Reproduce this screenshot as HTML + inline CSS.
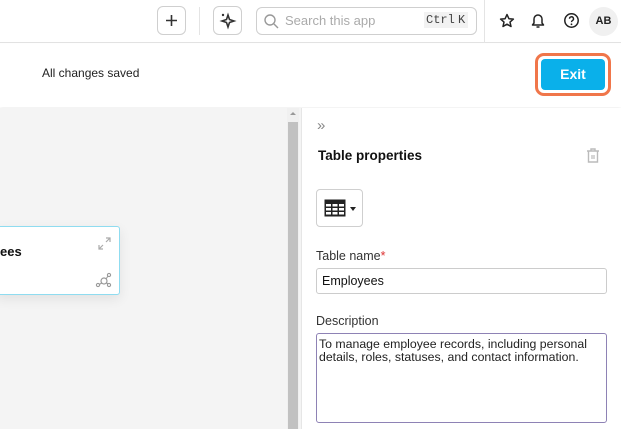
<!DOCTYPE html>
<html><head><style>
*{box-sizing:border-box;margin:0;padding:0}
body{width:621px;height:429px;overflow:hidden;font-family:"Liberation Sans",sans-serif;background:#fff;position:relative;color:#111}
.a{position:absolute}
.btn{border:1px solid #cfcfcf;border-radius:6px;background:#fff}
</style></head><body>
<div class="a" style="left:0;top:0;width:621px;height:43px;border-bottom:1px solid #e2e2e2;background:#fff"></div>
<div class="a btn" style="left:157px;top:6px;width:29px;height:29px"><svg width="27" height="27"><path d="M13.5 8v11M8 13.5h11" stroke="#333" stroke-width="1.6"/></svg></div>
<div class="a" style="left:199px;top:7px;width:1px;height:28px;background:#e4e4e4"></div>
<div class="a btn" style="left:213px;top:6px;width:29px;height:29px">
<svg width="27" height="27" viewBox="0 0 27 27"><path d="M14 8 L15.5 12.5 L20 14 L15.5 15.5 L14 20 L12.5 15.5 L8 14 L12.5 12.5Z" fill="none" stroke="#333" stroke-width="1.6"/><circle cx="9" cy="8" r="1.2" fill="#333"/></svg></div>
<div class="a" style="left:256px;top:7px;width:221px;height:28px;border:1px solid #cfcfcf;border-radius:6px"></div>
<svg class="a" style="left:263px;top:13px" width="16" height="16"><circle cx="7" cy="7" r="5" fill="none" stroke="#999" stroke-width="1.4"/><path d="M11 11l4 4" stroke="#999" stroke-width="1.4"/></svg>
<div class="a" style="left:285px;top:13px;font-size:13px;color:#aaa">Search this app</div>
<div class="a" style="left:424px;top:12px;font-family:'Liberation Mono',monospace;font-size:12px;color:#444;background:#f2f2f2;padding:1px 2px">Ctrl</div>
<div class="a" style="left:455px;top:12px;font-family:'Liberation Mono',monospace;font-size:12px;color:#444;background:#f2f2f2;padding:1px 3px">K</div>
<div class="a" style="left:484px;top:0;width:1px;height:43px;background:#e4e4e4"></div>
<svg class="a" style="left:499px;top:13px" width="16" height="16"><path d="M8 1.5l1.9 4.2 4.5.4-3.4 3 1 4.4L8 11.2 4 13.5l1-4.4-3.4-3 4.5-.4z" fill="none" stroke="#222" stroke-width="1.5" stroke-linejoin="round"/></svg>
<svg class="a" style="left:530px;top:12px" width="16" height="17"><path d="M4 11V7a4 4 0 018 0v4l1.5 2h-11z" fill="none" stroke="#222" stroke-width="1.5" stroke-linejoin="round"/><path d="M6.5 15h3" stroke="#222" stroke-width="1.5"/></svg>
<svg class="a" style="left:563px;top:12px" width="17" height="17"><circle cx="8.5" cy="8.5" r="6.7" fill="none" stroke="#222" stroke-width="1.5"/><path d="M6.5 6.8a2 2 0 113 1.7c-.7.4-1 .8-1 1.6" fill="none" stroke="#222" stroke-width="1.4"/><circle cx="8.5" cy="12.3" r=".9" fill="#222"/></svg>
<div class="a" style="left:589px;top:7px;width:29px;height:29px;border-radius:50%;background:#f0f0f0;font-size:11px;font-weight:bold;text-align:center;line-height:29px;color:#222">AB</div>

<div class="a" style="left:0;top:44px;width:621px;height:63px;background:#fff;box-shadow:0 2px 4px rgba(0,0,0,.06)"></div>
<div class="a" style="left:42px;top:66px;font-size:12px;color:#222">All changes saved</div>
<div class="a" style="left:535px;top:53px;width:76px;height:43px;border:3px solid #f0764a;border-radius:9px"></div>
<div class="a" style="left:541px;top:59px;width:64px;height:31px;background:#0ab0ea;border-radius:4px;color:#fff;font-size:14px;font-weight:bold;text-align:center;line-height:31px">Exit</div>

<div class="a" style="left:0;top:108px;width:301px;height:321px;background:#f4f4f4"></div>
<div class="a" style="left:287px;top:108px;width:12px;height:321px;background:#f0f0f0"></div>
<div class="a" style="left:288px;top:122px;width:10px;height:307px;background:#c1c1c1"></div>
<div class="a" style="left:290px;top:112px;width:0;height:0;border-left:3px solid transparent;border-right:3px solid transparent;border-bottom:3px solid #999"></div>

<div class="a" style="left:-4px;top:226px;width:124px;height:69px;background:#fff;border:1px solid #8fdcf0;border-radius:3px;box-shadow:0 4px 12px rgba(0,0,0,.08)"></div>
<div class="a" style="left:0;top:244px;font-size:13px;font-weight:bold;color:#111">ees</div>
<svg class="a" style="left:97px;top:236px" width="15" height="15"><path d="M9 2h4v4M13 2l-4 4M6 13H2V9M2 13l4-4" fill="none" stroke="#aaa" stroke-width="1.2"/></svg>
<svg class="a" style="left:95px;top:271px" width="18" height="18"><circle cx="9" cy="10" r="3" fill="none" stroke="#999" stroke-width="1.2"/><circle cx="14" cy="4" r="1.6" fill="none" stroke="#999" stroke-width="1.1"/><circle cx="3" cy="14" r="1.6" fill="none" stroke="#999" stroke-width="1.1"/><circle cx="14" cy="14" r="1.6" fill="none" stroke="#999" stroke-width="1.1"/><path d="M11 8l2-3M7 12l-3 1.5M11.5 12l1.5 1" stroke="#999" stroke-width="1.1"/></svg>

<div class="a" style="left:301px;top:108px;width:320px;height:321px;background:#fff;border-left:1px solid #e6e6e6"></div>
<div class="a" style="left:317px;top:117px;font-size:15px;color:#888">»</div>
<div class="a" style="left:318px;top:148px;font-size:13.5px;font-weight:bold;color:#111">Table properties</div>
<svg class="a" style="left:585px;top:147px" width="16" height="17"><path d="M2 4h12M6 4V2h4v2M3.5 4v11h9V4" fill="none" stroke="#bbb" stroke-width="1.4"/><path d="M7 8v4M9 8v4" stroke="#bbb" stroke-width="1.2"/></svg>
<div class="a btn" style="left:316px;top:189px;width:47px;height:38px;border-radius:4px"></div>
<svg class="a" style="left:324px;top:199px" width="22" height="18"><rect x="0.5" y="0.5" width="21" height="17" fill="#222"/><g fill="#fff"><rect x="2" y="5" width="5" height="2.5"/><rect x="8.5" y="5" width="5" height="2.5"/><rect x="15" y="5" width="5" height="2.5"/><rect x="2" y="9" width="5" height="2.5"/><rect x="8.5" y="9" width="5" height="2.5"/><rect x="15" y="9" width="5" height="2.5"/><rect x="2" y="13" width="5" height="2.5"/><rect x="8.5" y="13" width="5" height="2.5"/><rect x="15" y="13" width="5" height="2.5"/></g></svg>
<div class="a" style="left:350px;top:207px;width:0;height:0;border-left:3px solid transparent;border-right:3px solid transparent;border-top:4px solid #222"></div>
<div class="a" style="left:316px;top:249px;font-size:12.5px;color:#333">Table name<span style="color:#d33">*</span></div>
<div class="a" style="left:316px;top:268px;width:291px;height:26px;border:1px solid #ccc;border-radius:3px;font-size:12.5px;padding:5px 5px;color:#111">Employees</div>
<div class="a" style="left:316px;top:314px;font-size:12.5px;color:#333">Description</div>
<div class="a" style="left:316px;top:333px;width:291px;height:90px;border:1px solid #8e82b5;border-radius:3px;font-size:12.3px;padding:4px 2px;line-height:13px;color:#222">To manage employee records, including personal details, roles, statuses, and contact information.</div>
</body></html>
